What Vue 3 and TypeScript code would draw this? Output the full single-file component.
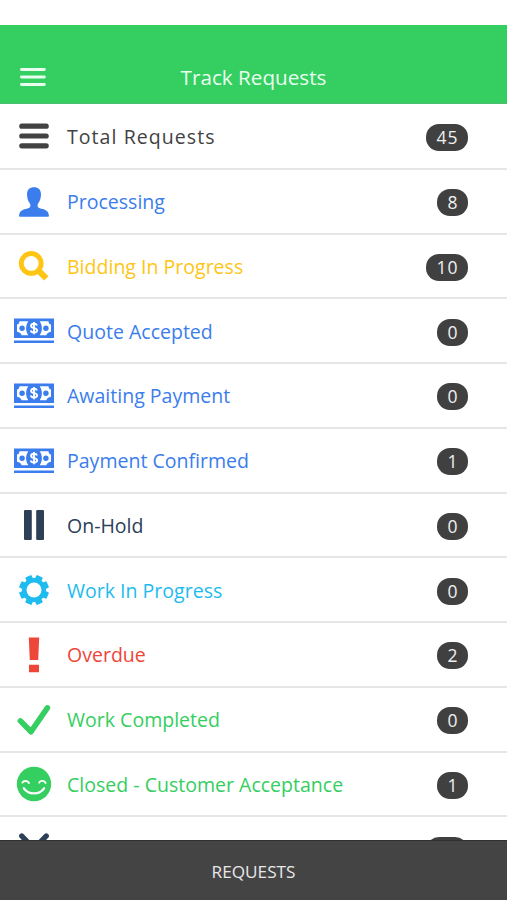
<script setup lang="ts">
type IconName =
  | 'bars' | 'person' | 'search' | 'cash' | 'pause' | 'gear' | 'alert' | 'check' | 'smile' | 'cross'

interface StatusRow {
  id: number
  label: string
  count: number | null
  icon: IconName
  tone: string
}

const rows: StatusRow[] = [
  { id: 1, label: 'Total Requests', count: 45, icon: 'bars', tone: 'dark' },
  { id: 2, label: 'Processing', count: 8, icon: 'person', tone: 'blue' },
  { id: 3, label: 'Bidding In Progress', count: 10, icon: 'search', tone: 'yellow' },
  { id: 4, label: 'Quote Accepted', count: 0, icon: 'cash', tone: 'blue' },
  { id: 5, label: 'Awaiting Payment', count: 0, icon: 'cash', tone: 'blue' },
  { id: 6, label: 'Payment Confirmed', count: 1, icon: 'cash', tone: 'blue' },
  { id: 7, label: 'On-Hold', count: 0, icon: 'pause', tone: 'navy' },
  { id: 8, label: 'Work In Progress', count: 0, icon: 'gear', tone: 'cyan' },
  { id: 9, label: 'Overdue', count: 2, icon: 'alert', tone: 'red' },
  { id: 10, label: 'Work Completed', count: 0, icon: 'check', tone: 'green' },
  { id: 11, label: 'Closed - Customer Acceptance', count: 1, icon: 'smile', tone: 'green' },
  { id: 12, label: '', count: null, icon: 'cross', tone: 'navy' },
]

// Eight flared teeth around a ring, centred on (20, 20).
const gearPoints: string = Array.from({ length: 8 }, (_, i) => {
  const base = (i * 45 + 22.5) * (Math.PI / 180)
  return [
    [-0.27, 11.6],
    [-0.2, 14.7],
    [0.2, 14.7],
    [0.27, 11.6],
  ]
    .map(([a, r]) => `${(20 + r * Math.cos(base + a)).toFixed(2)},${(20 + r * Math.sin(base + a)).toFixed(2)}`)
    .join(' ')
}).join(' ')
</script>

<template>
  <div class="screen">
    <header class="topbar">
      <button class="menu" aria-label="Menu">
        <svg width="26" height="20" viewBox="0 0 26 20">
          <path d="M1.4 2.5H24.4M1.4 10H24.4M1.4 17.500H24.4" stroke="currentColor" stroke-width="2.800" stroke-linecap="round" />
        </svg>
      </button>
      <h1 class="title">Track Requests</h1>
    </header>

    <main class="list">
      <div v-for="row in rows" :key="row.id" class="row" :class="row.tone">
        <svg class="icon" width="40" height="40" viewBox="0 0 40 40">
          <path v-if="row.icon === 'bars'" d="M7.8 10.2H32.2M7.8 20H32.2M7.8 29.8H32.2" stroke="currentColor" stroke-width="5.200" stroke-linecap="round" />
          <path v-else-if="row.icon === 'person'" fill="currentColor" d="M20 5.300c4.300 0 7 2.600 7 7 0 3.900-1.200 7.200-2.900 9.200-.8 1-.7 3.200.3 4 .9.800 2 1 4 1.500 3.700.9 6.100 2.500 6.500 6.200.1 1.100-.3 1.600-1.200 1.600H6.300c-.9 0-1.300-.5-1.200-1.600.4-3.700 2.800-5.300 6.500-6.200 2-.5 3.100-.7 4-1.500 1-.8 1.100-3 .3-4-1.700-2-2.900-5.300-2.900-9.200 0-4.400 2.700-7 7-7z" />
          <g v-else-if="row.icon === 'search'" fill="none" stroke="currentColor">
            <circle cx="17.200" cy="17.400" r="9.900" stroke-width="4.900" />
            <path d="M24.100 24.200L32.300 32.400" stroke-width="6.200" />
          </g>
          <g v-else-if="row.icon === 'cash'">
            <path fill="currentColor" d="M0 7.500H40V26.900H0zM0 29.500H40V32H0z" />
            <path fill="#fff" d="M5.500 10.200H14.300C12.800 12.400 12.100 14.800 12.100 17.200S12.800 22 14.300 24.200H7.600C7.200 22.400 5.600 21 3 20.700V13.600C4.600 13.300 5.400 12.200 5.500 10.200zM34.500 10.200H25.700C27.200 12.400 27.900 14.800 27.900 17.200S27.200 22 25.700 24.200H32.400C32.800 22.400 34.400 21 37 20.700V13.600C35.400 13.300 34.600 12.200 34.500 10.200z" />
            <circle cx="8.100" cy="17.200" r="2.700" fill="currentColor" />
            <circle cx="31.900" cy="17.200" r="2.700" fill="currentColor" />
            <path d="M23 14.500C22.500 13.200 21.500 12.800 20 12.800c-1.800 0-2.900.8-2.900 2.100 0 3 6 1.400 6 4.400 0 1.300-1.200 2.200-3.100 2.200-1.800 0-2.900-.7-3.300-2M20 11v12.200" fill="none" stroke="#fff" stroke-width="1.900" />
          </g>
          <path v-else-if="row.icon === 'pause'" fill="currentColor" d="M11 5h5.800q1 0 1 1V34q0 1-1 1H11q-1 0-1-1V6q0-1 1-1zM23.200 5H29q1 0 1 1V34q0 1-1 1H23.200q-1 0-1-1V6q0-1 1-1z" />
          <g v-else-if="row.icon === 'gear'">
            <polygon :points="gearPoints" fill="currentColor" stroke="currentColor" stroke-width="1" stroke-linejoin="round" />
            <circle cx="20" cy="20" r="7.500" fill="#fff" />
          </g>
          <path v-else-if="row.icon === 'alert'" fill="currentColor" d="M14.800 2.500H25.200L24.200 25H15.800zM15 29.800H25V37.200H15z" />
          <path v-else-if="row.icon === 'check'" d="M6.400 20.900L17 31.700L33.400 7.900" fill="none" stroke="currentColor" stroke-width="5.600" stroke-linecap="round" stroke-linejoin="round" />
          <g v-else-if="row.icon === 'smile'" fill="none" stroke="#fff" stroke-linecap="round">
            <circle cx="20" cy="20" r="17.200" fill="currentColor" stroke="none" />
            <path d="M8.400 18.600C9.300 16.600 13.700 16.100 15 19M25.200 18.600C26.400 16.100 30.700 16.500 31.600 18.900" stroke-width="1.900" />
            <path d="M9.900 24.300C14.600 31.100 25.400 31.100 30.100 24.300" stroke-width="2.300" />
          </g>
          <path v-else d="M7.800 7L32.200 33M32.200 7L7.800 33" stroke="currentColor" stroke-width="5.400" stroke-linecap="round" />
        </svg>
        <span class="label">{{ row.label }}</span>
        <span class="badge" :class="{ wide: row.count === null || row.count > 9 }">{{ row.count }}</span>
      </div>
    </main>

    <footer class="footer">REQUESTS</footer>
  </div>
</template>

<style>
body {
  margin: 0;
  background: #fff;
}
</style>

<style scoped>
.screen {
  box-sizing: border-box;
  display: flex;
  flex-direction: column;
  height: 900px;
  padding-top: 25px;
  overflow: hidden;
  background: #fff;
  font-family: "Open Sans", "Noto Sans", sans-serif;
}
.topbar {
  box-sizing: border-box;
  flex: none;
  display: grid;
  grid-template-columns: 66px 1fr 66px;
  align-items: center;
  height: 79px;
  padding-top: 26px;
  border-bottom: 1px solid #4fbb70;
  background: #35ce60;
  color: #e8fff0;
}
.menu {
  display: flex;
  margin: 0;
  padding: 0 0 0 20px;
  border: 0;
  background: none;
  color: inherit;
}
.title {
  margin: 0;
  text-align: center;
  font-size: 20.700px;
  font-weight: 400;
  line-height: 28px;
}
.list {
  flex: 1;
  min-height: 0;
  overflow: hidden;
}
.row {
  box-sizing: border-box;
  display: flex;
  align-items: center;
  height: 64.75px;
  padding: 2px 39px 0 14px;
  border-bottom: 2px solid #e6e6e6;
}
.row:first-child {
  height: 65.750px;
}
.icon {
  flex: none;
  margin-bottom: 1px;
}
.label {
  flex: 1;
  margin-left: 13px;
  font-size: 19.550px;
  line-height: 28px;
  white-space: nowrap;
}
.badge {
  box-sizing: border-box;
  width: 31px;
  height: 27px;
  margin-top: 1px;
  padding-left: 1px;
  border-radius: 13px;
  background: #404040;
  color: #f0f0f0;
  font-size: 17.500px;
  font-weight: 500;
  line-height: 27px;
  letter-spacing: 1px;
  text-align: center;
}
.badge.wide {
  width: 42px;
}
.dark { color: #424242; }
.dark .label { letter-spacing: 1.050px; font-weight: 500; }
.blue { color: #3b7ded; }
.yellow { color: #fec514; }
.navy { color: #2e4058; }
.cyan { color: #1ebbee; }
.red { color: #ef463a; }
.green { color: #35ce60; }
.footer {
  box-sizing: border-box;
  flex: none;
  height: 60px;
  border-top: 1px solid #303030;
  background: #444;
  color: #e8e8e8;
  font-size: 17.200px;
  line-height: 62px;
  text-align: center;
}
</style>
